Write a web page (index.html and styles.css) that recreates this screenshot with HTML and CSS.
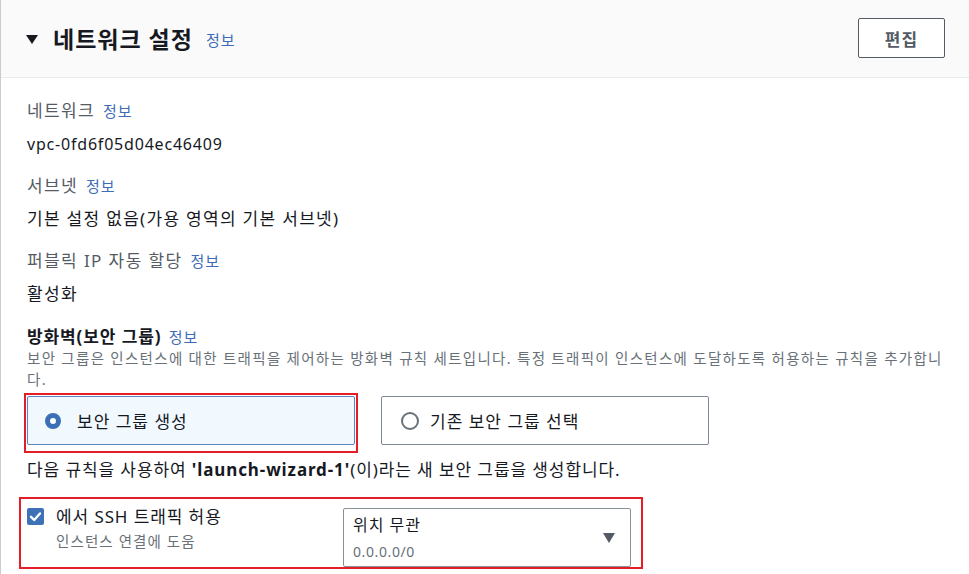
FILE: index.html
```html
<!DOCTYPE html>
<html lang="ko">
<head>
  <meta charset="UTF-8">
  <meta name="viewport" content="width=device-width, initial-scale=1">
  <title>네트워크 설정</title>
  <link rel="stylesheet" href="styles.css">
</head>
<body>
  <div class="panel">
    <div class="panel-header">
      <h2 class="panel-title">
        <span class="caret"></span>
        <span>네트워크 설정</span>
        <a class="info" href="#">정보</a>
      </h2>
      <button class="btn">편집</button>
    </div>

    <div class="panel-body">
      <div class="field">
        <div class="label">네트워크 <a class="info" href="#">정보</a></div>
        <div class="value id">vpc-0fd6f05d04ec46409</div>
      </div>
      <div class="field">
        <div class="label">서브넷 <a class="info" href="#">정보</a></div>
        <div class="value">기본 설정 없음(가용 영역의 기본 서브넷)</div>
      </div>
      <div class="field">
        <div class="label">퍼블릭 IP 자동 할당 <a class="info" href="#">정보</a></div>
        <div class="value">활성화</div>
      </div>

      <div class="field firewall">
        <div class="label strong">방화벽(보안 그룹) <a class="info" href="#">정보</a></div>
        <p class="desc">보안 그룹은 인스턴스에 대한 트래픽을 제어하는 방화벽 규칙 세트입니다. 특정 트래픽이 인스턴스에 도달하도록 허용하는 규칙을 추가합니다.</p>

        <div class="tiles">
          <div class="mark mark-tile">
            <label class="tile selected">
              <span class="radio on"></span>
              <span>보안 그룹 생성</span>
            </label>
          </div>
          <label class="tile">
            <span class="radio"></span>
            <span>기존 보안 그룹 선택</span>
          </label>
        </div>

        <p class="note">다음 규칙을 사용하여 <b>'launch-wizard-1'</b>(이)라는 새 보안 그룹을 생성합니다.</p>

        <div class="mark mark-rule">
          <div class="rule">
            <div class="rule-check">
              <span class="checkbox">
                <svg width="17" height="17" viewBox="0 0 17 17"><path d="M4 8.8 L7.2 12 L13 5.5" fill="none" stroke="#fff" stroke-width="2.4" stroke-linecap="round" stroke-linejoin="round"/></svg>
              </span>
              <div>
                <div class="rule-title">에서 SSH 트래픽 허용</div>
                <div class="rule-sub">인스턴스 연결에 도움</div>
              </div>
            </div>
            <div class="select">
              <div>
                <div class="select-value">위치 무관</div>
                <div class="select-sub">0.0.0.0/0</div>
              </div>
              <span class="select-caret"></span>
            </div>
          </div>
        </div>
      </div>
    </div>
  </div>
</body>
</html>
```

FILE: styles.css
```css
body {
  margin: 0;
  font-family: "Noto Sans", "Noto Sans CJK KR", sans-serif;
  color: #16191f;
  background: #ffffff;
}
a {
  text-decoration: none;
}
.panel {
  border-left: 1px solid #c9cdd1;
  min-height: 574px;
}
.panel-header {
  display: flex;
  align-items: center;
  justify-content: space-between;
  height: 77px;
  padding: 0 24px 0 25px;
  background: #fafafa;
  border-bottom: 1px solid #eaeded;
}
.panel-title {
  display: flex;
  align-items: center;
  margin: 0;
  font-size: 23px;
  font-weight: bold;
  letter-spacing: 1px;
  line-height: 30px;
}
.caret {
  width: 0;
  height: 0;
  border-left: 6px solid transparent;
  border-right: 6px solid transparent;
  border-top: 9px solid #16191f;
  margin: 2px 15px 0 0;
}
.panel-title .info {
  margin-left: 13px;
  margin-top: 4px;
}
.info {
  color: #3c6db4;
  font-size: 15px;
  font-weight: normal;
  letter-spacing: 1px;
  line-height: 1;
}
.btn {
  width: 87px;
  height: 40px;
  margin-top: -1px;
  border: 1px solid #545b64;
  border-radius: 2px;
  background: #ffffff;
  color: #545b64;
  font-family: inherit;
  font-size: 17px;
  font-weight: bold;
  letter-spacing: 1px;
}
.panel-body {
  padding: 22px 24px 0 26px;
}
.field {
  margin-bottom: 20px;
}
.label {
  font-size: 17px;
  letter-spacing: 1.4px;
  line-height: 22px;
  color: #545b64;
}
.label .info {
  margin-left: 2px;
}
.label.strong {
  color: #16191f;
  font-weight: bold;
  letter-spacing: 0.9px;
}
.value {
  margin-top: 11px;
  font-size: 17px;
  letter-spacing: 1.3px;
  line-height: 22px;
}
.value.id {
  font-size: 16px;
  letter-spacing: 0.8px;
}
.firewall {
  margin-top: 21px;
}
.desc {
  margin: 0;
  font-size: 14.5px;
  letter-spacing: 1.3px;
  line-height: 21px;
  color: #687078;
}
.tiles {
  display: flex;
  align-items: flex-start;
  margin-top: 3px;
}
.mark {
  border: 2px solid #e41e26;
}
.mark-tile {
  margin-left: -3px;
  padding: 1px 1px 6px 1px;
}
.tile {
  box-sizing: border-box;
  display: flex;
  align-items: center;
  width: 328px;
  height: 49px;
  padding-left: 19px;
  border: 1px solid #7d8998;
  border-radius: 2px;
  font-size: 17px;
  letter-spacing: 1px;
}
.tiles > .tile {
  margin: 3px 0 0 23px;
}
.tile.selected {
  background: #f1f8fe;
  border-color: #5a86c2;
  padding-left: 17px;
}
.radio {
  box-sizing: border-box;
  width: 18px;
  height: 18px;
  margin-right: 11px;
  border: 2px solid #687078;
  border-radius: 50%;
  background: #ffffff;
}
.radio.on {
  width: 16px;
  height: 16px;
  margin-right: 16px;
  border: 5px solid #3b6fb6;
}
.note {
  margin: 6px 0 0;
  font-size: 17px;
  letter-spacing: 0.9px;
  line-height: 22px;
}
.mark-rule {
  width: 614px;
  margin: 16px 0 0 -8px;
  padding: 9px 0 0 6px;
}
.rule {
  display: grid;
  grid-template-columns: 316px 288px;
}
.rule-check {
  display: flex;
  align-items: flex-start;
  gap: 12px;
}
.checkbox {
  display: block;
  width: 17px;
  height: 17px;
  border-radius: 2px;
  background: #3f71b7;
}
.checkbox svg {
  display: block;
}
.rule-title {
  font-size: 17px;
  letter-spacing: 0.9px;
  line-height: 18px;
}
.rule-sub {
  margin-top: 5px;
  font-size: 14.5px;
  letter-spacing: 1.1px;
  line-height: 20px;
  color: #687078;
}
.select {
  box-sizing: border-box;
  display: flex;
  align-items: center;
  justify-content: space-between;
  height: 59px;
  padding: 0 15px 0 9px;
  border: 1px solid #879196;
  border-radius: 2px;
}
.select-value {
  font-size: 16px;
  letter-spacing: 1px;
  line-height: 22px;
}
.select-sub {
  margin-top: 6px;
  font-size: 14px;
  letter-spacing: 0.6px;
  line-height: 20px;
  color: #687078;
}
.select-caret {
  width: 0;
  height: 0;
  border-left: 6px solid transparent;
  border-right: 6px solid transparent;
  border-top: 10px solid #545b64;
}
```
